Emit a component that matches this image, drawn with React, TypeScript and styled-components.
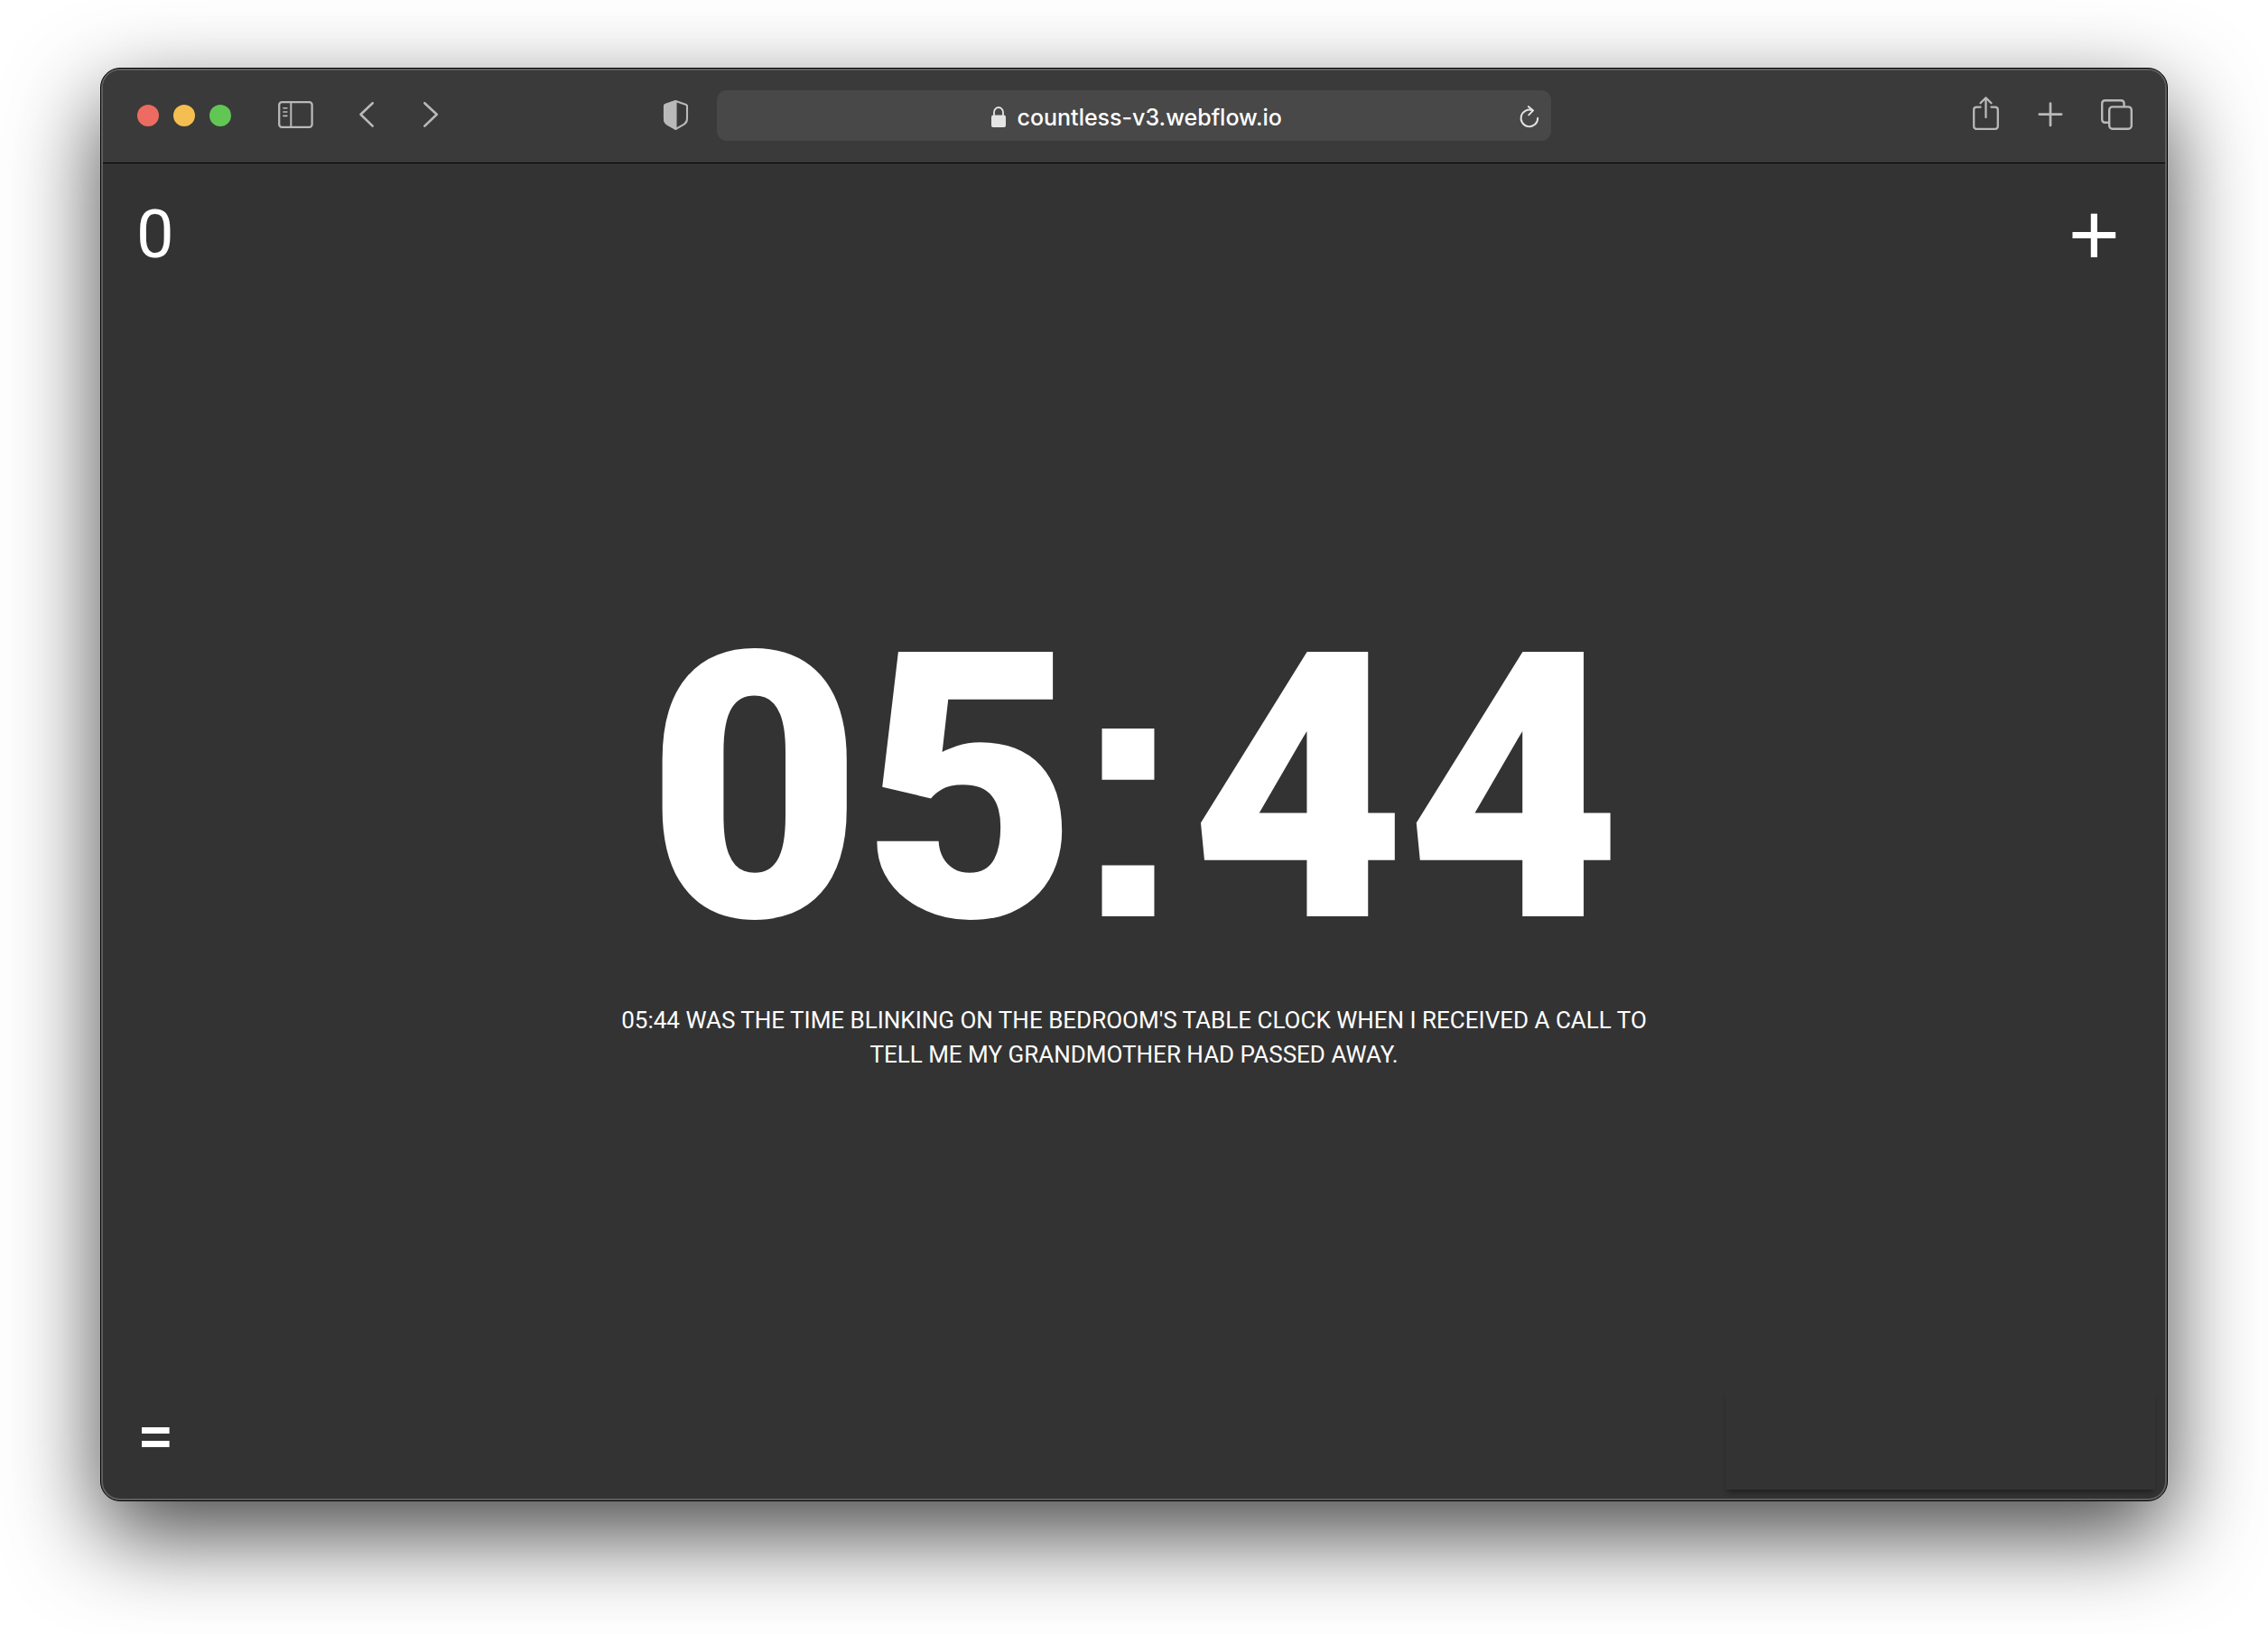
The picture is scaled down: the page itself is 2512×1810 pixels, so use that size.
import React from "react";
import styled, { createGlobalStyle } from "styled-components";

const GlobalStyle = createGlobalStyle`
  *, *::before, *::after { box-sizing: border-box; }
  body { margin: 0; background: #fff; font-family: Roboto, "Liberation Sans", sans-serif; }
  button, input { font: inherit; color: inherit; }
`;

const Desktop = styled.div`
  display: flex;
  min-height: 100vh;
  padding: 75px 111px 147px;
  overflow: hidden;
`;

const BrowserWindow = styled.div`
  display: flex;
  flex: 1;
  min-width: 0;
  border: 1px solid #000;
  border-radius: 22px;
  background: #5e5e5e;
  padding: 2px;
  box-shadow: 0 37px 100px rgba(0, 0, 0, 0.72);
`;

const WindowBody = styled.div`
  display: flex;
  flex-direction: column;
  flex: 1;
  min-width: 0;
  overflow: hidden;
  border-radius: 19px;
  background: #333;
  color: #fff;
`;

const Toolbar = styled.header`
  display: grid;
  grid-template-columns: minmax(0, 1fr) minmax(0, 924px) minmax(0, 1fr);
  column-gap: 26px;
  align-items: center;
  height: 103px;
  padding: 0 34px 2px;
  border-bottom: 1px solid #000;
  background: #3a3a3a;
  color: #b9b9b9;
`;

const ToolbarStart = styled.div`
  display: flex;
  align-items: center;
  gap: 38px;
`;

const TrafficLights = styled.div`
  display: flex;
  gap: 16px;
  margin: 0 14px 0 4px;
`;

const Light = styled.button<{ $color: string }>`
  width: 24px;
  height: 24px;
  padding: 0;
  border: 0;
  border-radius: 50%;
  background: ${(p) => p.$color};
`;

const IconRow = styled.div<{ $end?: boolean }>`
  display: flex;
  gap: 32px;
  justify-content: ${(p) => (p.$end ? "flex-end" : "flex-start")};
`;

const IconButton = styled.button<{ $push?: boolean }>`
  display: flex;
  align-items: center;
  justify-content: center;
  width: 40px;
  height: 44px;
  padding: 0;
  border: 0;
  background: none;
  margin-left: ${(p) => (p.$push ? "auto" : "0")};
`;

const Icon = styled.svg`
  flex: none;
  fill: none;
  stroke: currentColor;
  stroke-linecap: round;
  stroke-linejoin: round;
`;

const AddressBar = styled.form`
  display: grid;
  grid-template-columns: 40px minmax(0, 1fr) 40px;
  align-items: center;
  height: 56px;
  padding: 4px 4px 0;
  border-radius: 11px;
  background: #484848;
  color: #e4e4e4;
`;

const Address = styled.label`
  grid-column: 2;
  display: flex;
  align-items: center;
  justify-content: center;
  gap: 13px;
  padding-left: 4px;
`;

const AddressInput = styled.input`
  width: 292px;
  height: 40px;
  padding: 0;
  border: 0;
  outline: 0;
  background: none;
  color: #fff;
  font: 500 25px/40px Inter, "Liberation Sans", sans-serif;
`;

const Page = styled.div`
  display: flex;
  flex-direction: column;
  flex: 1;
`;

const PageTop = styled.div`
  display: flex;
  align-items: center;
  justify-content: space-between;
  padding: 42px 50px 0 37px;
`;

const Counter = styled.span`
  font-size: 74px;
  line-height: 74px;
`;

const AddButton = styled.button`
  padding: 0;
  border: 0;
  background: none;
  color: #fff;
  font-family: "Liberation Sans", sans-serif;
  font-size: 98px;
  line-height: 74px;
`;

const MenuButton = styled.button`
  padding: 15px 0 0;
  border: 0;
  background: none;
  color: #fff;
  font-size: 72px;
  font-weight: 500;
  line-height: 74px;
`;

const Story = styled.main`
  display: flex;
  flex-direction: column;
  flex: 1;
  align-items: center;
  justify-content: center;
  gap: 30px;
  padding-top: 19px;
`;

const Time = styled.h1`
  margin: 0;
  font-size: 412px;
  font-weight: 900;
  line-height: 1;
`;

const Colon = styled.span`
  margin-left: -13px;
  font-family: "Liberation Sans", sans-serif;
  font-weight: 700;
  line-height: 0;
`;

const Caption = styled.p`
  max-width: 1160px;
  margin: 0;
  font-size: 26px;
  font-weight: 400;
  line-height: 38px;
  text-align: center;
  text-transform: uppercase;
`;

const PageBottom = styled.div`
  display: flex;
  align-items: flex-start;
  justify-content: space-between;
  padding: 0 11px 10px 38px;
`;

const Badge = styled.aside`
  width: 476px;
  height: 110px;
  background: #333;
  box-shadow: 0 5px 6px -2px rgba(0, 0, 0, 0.4);
`;

const SidebarIcon = () => (
  <Icon width="40" height="44" viewBox="0 0 40 44" strokeWidth="2.3">
    <rect x="1.2" y="7.2" width="36.4" height="27.6" rx="3" />
    <path d="M14.3 7v28" strokeWidth="2" />
    <path d="M5.9 13.7h4M5.9 18h4M5.9 22.4h4" strokeWidth="1.6" />
  </Icon>
);

const BackIcon = () => (
  <Icon width="40" height="44" viewBox="0 0 40 44" strokeWidth="2.6">
    <path d="M26.7 8.2L13.5 20.8l13.2 12.8" />
  </Icon>
);

const ForwardIcon = () => (
  <Icon width="40" height="44" viewBox="0 0 40 44" strokeWidth="2.6">
    <path d="M12.3 8.2l13.5 12.6-13.5 12.8" />
  </Icon>
);

const ShieldIcon = () => (
  <Icon width="40" height="44" viewBox="0 0 40 44" strokeWidth="2.1">
    <path d="M20.5 6.1L32 10q1 .4 1 1.4v14q0 3.800-3.200 6.200L20.500 36.900l-9.300-5.300Q8 29.200 8 25.400v-14q0-1 1-1.400z" />
    <path d="M20.500 6.100v30.800l-9.300-5.300Q8 29.200 8 25.400v-14q0-1 1-1.400z" fill="currentColor" />
  </Icon>
);

const LockIcon = () => (
  <Icon width="16" height="28" viewBox="0 0 16 28">
    <path d="M3 13V8.500a5 5.500 0 0 1 10 0V13" strokeWidth="1.800" />
    <rect x="0" y="11.500" width="16" height="13.500" rx="2" fill="currentColor" stroke="none" />
  </Icon>
);

const ReloadIcon = () => (
  <Icon width="24" height="28" viewBox="0 0 24 28" strokeWidth="1.900">
    <path d="M15.500 6.300A9.300 9.300 0 1 0 21.200 14.700" />
    <path d="M10.800 2l5.300 4.400-4.900 4.900" />
  </Icon>
);

const ShareIcon = () => (
  <Icon width="40" height="44" viewBox="0 0 40 44" strokeWidth="2.300">
    <path d="M13.600 12.600H9.200Q6.200 12.600 6.200 15.600v18.200q0 3 3 3h20.600q3 0 3-3V15.600q0-3-3-3h-4.400" />
    <path d="M19.500 24V2.500M13.500 8.200l6-6 6 6" />
  </Icon>
);

const NewTabIcon = () => (
  <Icon width="40" height="44" viewBox="0 0 40 44" strokeWidth="2.700">
    <path d="M19 8.500v24.400M6.800 20.600h24.400" />
  </Icon>
);

const TabsIcon = () => (
  <Icon width="40" height="44" viewBox="0 0 40 44" strokeWidth="2.400">
    <rect x="12.200" y="12.400" width="24.600" height="24.400" rx="3.500" />
    <path d="M28.600 12V8.700q0-3.500-3.500-3.500H7.700q-3.500 0-3.500 3.500v17.600q0 3.500 3.500 3.500H12" />
  </Icon>
);

export default function App() {
  return (
    <>
      <GlobalStyle />
      <Desktop>
        <BrowserWindow>
          <WindowBody>
            <Toolbar>
              <ToolbarStart>
                <TrafficLights>
                  <Light $color="#ed6b60" aria-label="Close" />
                  <Light $color="#f5be50" aria-label="Minimize" />
                  <Light $color="#62c655" aria-label="Zoom" />
                </TrafficLights>
                <IconButton aria-label="Sidebar"><SidebarIcon /></IconButton>
                <IconRow>
                  <IconButton aria-label="Back"><BackIcon /></IconButton>
                  <IconButton aria-label="Forward"><ForwardIcon /></IconButton>
                </IconRow>
                <IconButton $push aria-label="Privacy report"><ShieldIcon /></IconButton>
              </ToolbarStart>
              <AddressBar onSubmit={(e) => e.preventDefault()}>
                <Address>
                  <LockIcon />
                  <AddressInput aria-label="Address" defaultValue="countless-v3.webflow.io" />
                </Address>
                <IconButton type="button" aria-label="Reload"><ReloadIcon /></IconButton>
              </AddressBar>
              <IconRow $end>
                <IconButton aria-label="Share"><ShareIcon /></IconButton>
                <IconButton aria-label="New tab"><NewTabIcon /></IconButton>
                <IconButton aria-label="Tab overview"><TabsIcon /></IconButton>
              </IconRow>
            </Toolbar>
            <Page>
              <PageTop>
                <Counter>0</Counter>
                <AddButton>+</AddButton>
              </PageTop>
              <Story>
                <Time>05<Colon>:</Colon>44</Time>
                <Caption>
                  05:44 was the time blinking on the bedroom's table clock when I received a call to
                  tell me my grandmother had passed away.
                </Caption>
              </Story>
              <PageBottom>
                <MenuButton>=</MenuButton>
                <Badge />
              </PageBottom>
            </Page>
          </WindowBody>
        </BrowserWindow>
      </Desktop>
    </>
  );
}
